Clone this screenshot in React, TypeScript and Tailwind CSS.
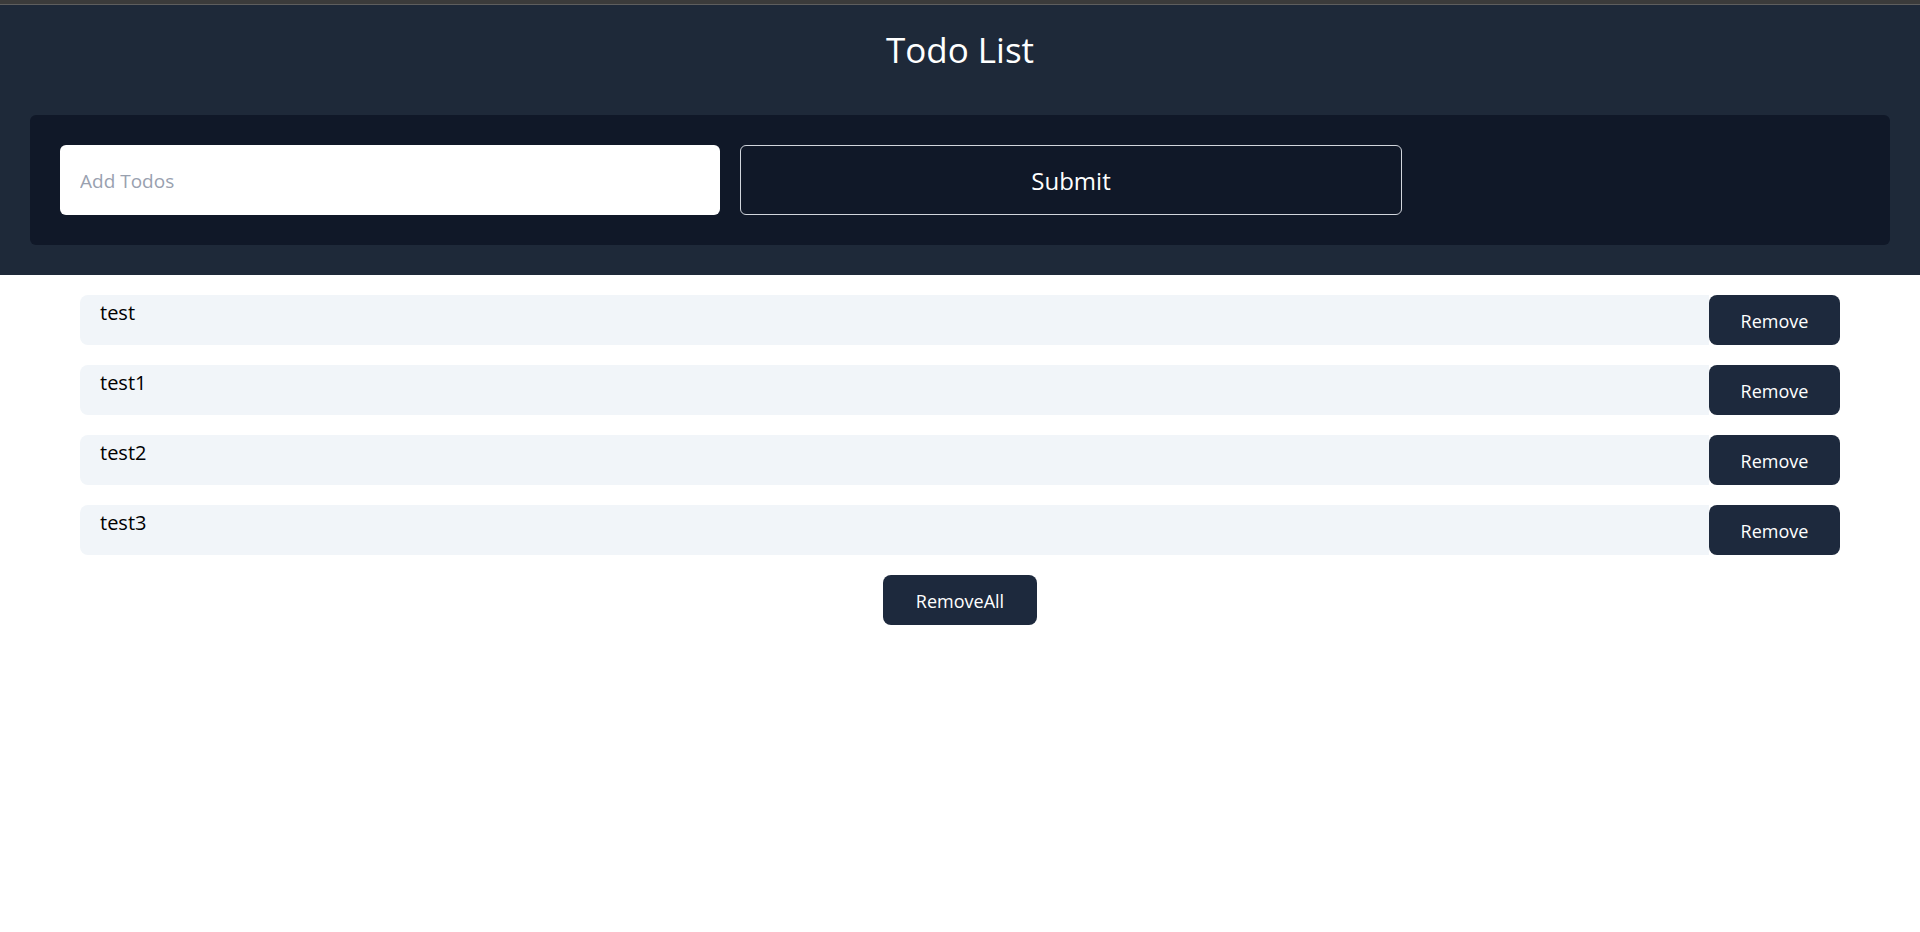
import { useState } from 'react';

const initialTodos = ['test', 'test1', 'test2', 'test3'];

export default function App() {
  const [todos, setTodos] = useState<string[]>(initialTodos);
  const [text, setText] = useState('');

  const addTodo = () => {
    if (!text.trim()) return;
    setTodos([...todos, text.trim()]);
    setText('');
  };

  return (
    <div className="min-h-screen bg-white font-['Open_Sans',sans-serif]">
      {/* window chrome strip */}
      <div className="h-1 bg-[#3b3b3b]" />
      <div className="h-px bg-[#5e5e5e]" />

      <header className="bg-gray-800 px-[30px] pt-[25px] pb-[30px]">
        <h1 className="text-center text-[35px] leading-10 text-white">Todo List</h1>
        <form
          className="mt-[45px] flex h-[130px] items-center gap-5 rounded-md bg-gray-900 px-[30px]"
          onSubmit={(e) => {
            e.preventDefault();
            addTodo();
          }}
        >
          <input
            value={text}
            onChange={(e) => setText(e.target.value)}
            placeholder="Add Todos"
            className="h-[70px] w-[660px] rounded-md bg-white pt-0.5 pl-5 text-[19px] text-black placeholder:text-gray-400 focus:outline-none"
          />
          <button
            type="submit"
            className="h-[70px] w-[662px] rounded-md border border-gray-300 pt-0.5 text-2xl text-white"
          >
            Submit
          </button>
        </form>
      </header>

      <ul className="mx-20 mt-5 flex flex-col gap-5">
        {todos.map((todo, i) => (
          <li key={i} className="flex h-[50px]">
            <div className="flex-1 rounded-l-lg bg-slate-100 pt-1 pl-5 text-xl leading-7 text-black">{todo}</div>
            <button
              onClick={() => setTodos(todos.filter((_, j) => j !== i))}
              className="w-[131px] rounded-lg bg-slate-800 pt-0.5 text-lg text-white"
            >
              Remove
            </button>
          </li>
        ))}
      </ul>

      <div className="mt-5 flex justify-center">
        <button
          onClick={() => setTodos([])}
          className="h-[50px] w-[154px] rounded-lg bg-slate-800 pt-0.5 text-lg text-white"
        >
          RemoveAll
        </button>
      </div>
    </div>
  );
}
